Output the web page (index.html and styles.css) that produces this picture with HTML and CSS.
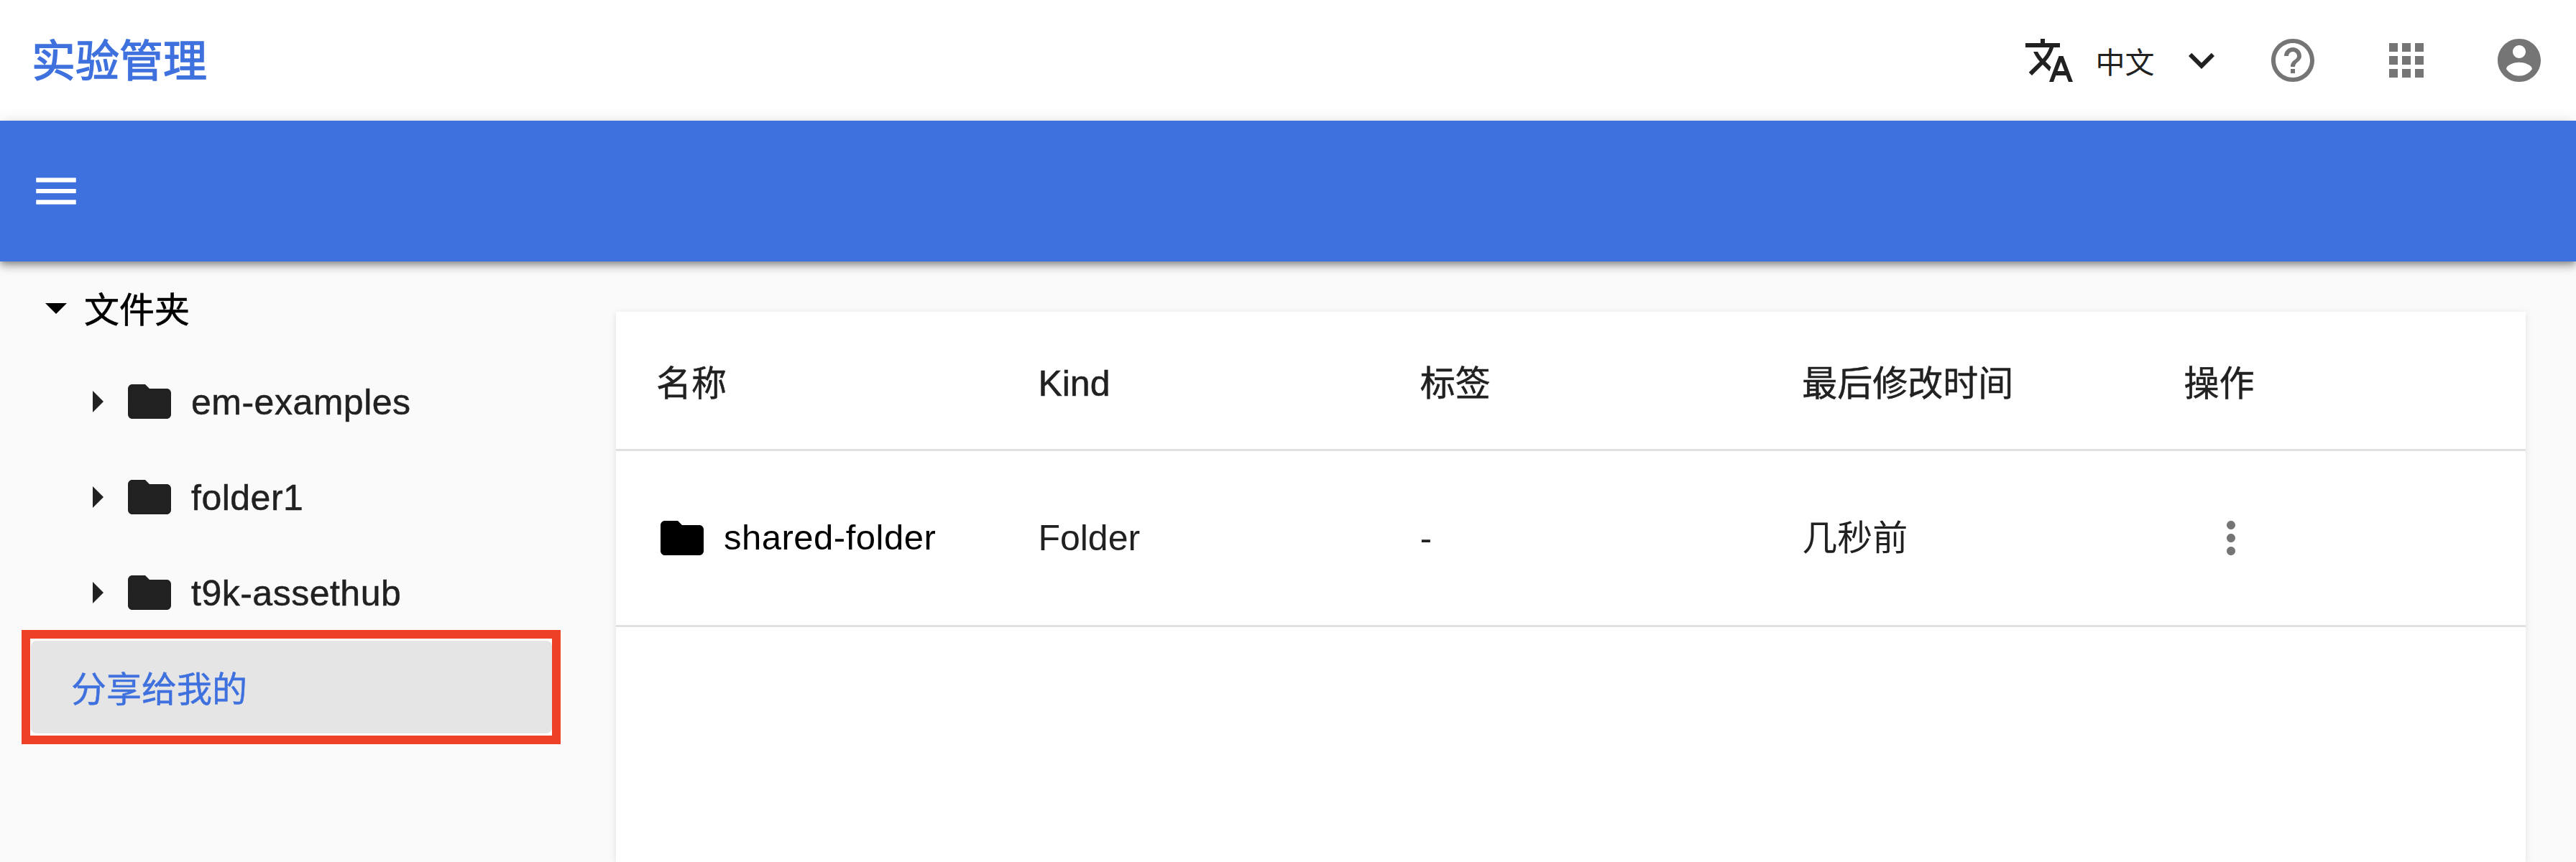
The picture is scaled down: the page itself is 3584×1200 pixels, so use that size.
FILE: index.html
```html
<!DOCTYPE html>
<html lang="zh">
<head>
    <meta charset="UTF-8">
    <meta name="viewport" content="width=device-width, initial-scale=1.0">
    <title>实验管理</title>
    <link rel="stylesheet" href="styles.css">
</head>
<body>
    <header class="app-header">
        <div class="app-title">实验管理</div>
        <div class="header-actions">
            <div class="lang-select">
                <svg class="icon icon-dark" viewBox="0 0 24 24"><path d="M12.87 15.07l-2.54-2.51.03-.03c1.74-1.94 2.98-4.17 3.71-6.53H17V4h-7V2H8v2H1v1.99h11.17C11.5 7.92 10.44 9.75 9 11.35 8.07 10.32 7.3 9.19 6.69 8h-2c.73 1.63 1.73 3.17 2.98 4.56l-5.09 5.02L4 19l5-5 3.11 3.11.76-2.04zM18.5 10h-2L12 22h2l1.12-3h4.75L21 22h2l-4.5-12zm-2.62 7l1.62-4.33L19.12 17h-3.24z"/></svg>
                <span class="lang-label">中文</span>
                <svg class="icon icon-dark" viewBox="0 0 24 24"><path d="M16.59 8.59L12 13.17 7.41 8.59 6 10l6 6 6-6z"/></svg>
            </div>
            <svg class="icon icon-grey" viewBox="0 0 24 24"><path d="M11 18h2v-2h-2v2zm1-16C6.48 2 2 6.48 2 12s4.48 10 10 10 10-4.48 10-10S17.52 2 12 2zm0 18c-4.41 0-8-3.59-8-8s3.59-8 8-8 8 3.59 8 8-3.59 8-8 8zm0-14c-2.21 0-4 1.79-4 4h2c0-1.1.9-2 2-2s2 .9 2 2c0 2-3 1.75-3 5h2c0-2.25 3-2.5 3-5 0-2.21-1.79-4-4-4z"/></svg>
            <svg class="icon icon-grey" viewBox="0 0 24 24"><path d="M4 8h4V4H4v4zm6 12h4v-4h-4v4zm-6 0h4v-4H4v4zm0-6h4v-4H4v4zm6 0h4v-4h-4v4zm6-10v4h4V4h-4zm-6 4h4V4h-4v4zm6 6h4v-4h-4v4zm0 6h4v-4h-4v4z"/></svg>
            <svg class="icon icon-grey" viewBox="0 0 24 24"><path d="M12 2C6.48 2 2 6.48 2 12s4.48 10 10 10 10-4.48 10-10S17.52 2 12 2zm0 3c1.66 0 3 1.34 3 3s-1.34 3-3 3-3-1.34-3-3 1.34-3 3-3zm0 14.2c-2.5 0-4.71-1.28-6-3.22.03-1.99 4-3.08 6-3.08 1.99 0 5.97 1.09 6 3.08-1.29 1.94-3.5 3.22-6 3.22z"/></svg>
        </div>
    </header>

    <div class="app-toolbar">
        <svg class="icon menu-icon" viewBox="0 0 24 24"><path d="M3 18h18v-2H3v2zm0-5h18v-2H3v2zm0-7v2h18V6H3z"/></svg>
    </div>

    <div class="app-body">
        <nav class="sidebar">
            <div class="tree-root">
                <svg class="icon icon-black" viewBox="0 0 24 24"><path d="M7 10l5 5 5-5z"/></svg>
                <span class="root-label">文件夹</span>
            </div>
            <div class="tree-item">
                <svg class="icon icon-dark" viewBox="0 0 24 24"><path d="M10 17l5-5-5-5v10z"/></svg>
                <svg class="icon icon-dark" viewBox="0 0 24 24"><path d="M10 4H4c-1.1 0-1.99.9-1.99 2L2 18c0 1.1.9 2 2 2h16c1.1 0 2-.9 2-2V8c0-1.1-.9-2-2-2h-8l-2-2z"/></svg>
                <span class="tree-label">em-examples</span>
            </div>
            <div class="tree-item">
                <svg class="icon icon-dark" viewBox="0 0 24 24"><path d="M10 17l5-5-5-5v10z"/></svg>
                <svg class="icon icon-dark" viewBox="0 0 24 24"><path d="M10 4H4c-1.1 0-1.99.9-1.99 2L2 18c0 1.1.9 2 2 2h16c1.1 0 2-.9 2-2V8c0-1.1-.9-2-2-2h-8l-2-2z"/></svg>
                <span class="tree-label">folder1</span>
            </div>
            <div class="tree-item">
                <svg class="icon icon-dark" viewBox="0 0 24 24"><path d="M10 17l5-5-5-5v10z"/></svg>
                <svg class="icon icon-dark" viewBox="0 0 24 24"><path d="M10 4H4c-1.1 0-1.99.9-1.99 2L2 18c0 1.1.9 2 2 2h16c1.1 0 2-.9 2-2V8c0-1.1-.9-2-2-2h-8l-2-2z"/></svg>
                <span class="tree-label">t9k-assethub</span>
            </div>
            <div class="shared-item">
                分享给我的
                <div class="annotation"></div>
            </div>
        </nav>

        <main class="content">
            <div class="file-card">
                <div class="file-row file-head">
                    <div class="cell">名称</div>
                    <div class="cell cell-latin">Kind</div>
                    <div class="cell">标签</div>
                    <div class="cell">最后修改时间</div>
                    <div class="cell">操作</div>
                </div>
                <div class="file-row file-line">
                    <div class="cell name-cell">
                        <svg class="icon icon-black" viewBox="0 0 24 24"><path d="M10 4H4c-1.1 0-1.99.9-1.99 2L2 18c0 1.1.9 2 2 2h16c1.1 0 2-.9 2-2V8c0-1.1-.9-2-2-2h-8l-2-2z"/></svg>
                        <span class="name-text">shared-folder</span>
                    </div>
                    <div class="cell cell-latin">Folder</div>
                    <div class="cell">-</div>
                    <div class="cell">几秒前</div>
                    <div class="cell">
                        <svg class="icon icon-grey more-icon" viewBox="0 0 24 24"><path d="M12 8c1.1 0 2-.9 2-2s-.9-2-2-2-2 .9-2 2 .9 2 2 2zm0 2c-1.1 0-2 .9-2 2s.9 2 2 2 2-.9 2-2-.9-2-2-2zm0 6c-1.1 0-2 .9-2 2s.9 2 2 2 2-.9 2-2-.9-2-2-2z"/></svg>
                    </div>
                </div>
            </div>
        </main>
    </div>
</body>
</html>
```

FILE: styles.css
```css
* {
    box-sizing: border-box;
}

body {
    margin: 0;
    height: 100vh;
    overflow: hidden;
    display: flex;
    flex-direction: column;
    background-color: #fafafa;
    color: #212121;
    font-family: "Liberation Sans", "Noto Sans CJK SC", sans-serif;
    font-size: 49px;
}

.icon {
    width: 72px;
    height: 72px;
    flex-shrink: 0;
    display: block;
    fill: currentColor;
}

.icon-dark {
    color: #212121;
}

.icon-grey {
    color: #757575;
}

.icon-black {
    color: #000;
}

.app-header {
    height: 168px;
    flex-shrink: 0;
    display: flex;
    align-items: center;
    justify-content: space-between;
    padding: 0 43px 0 44px;
    background-color: #fff;
}

.app-title {
    color: #3f71de;
    font-size: 61px;
    padding-bottom: 7px;
    -webkit-text-stroke: 1.4px #3f71de;
}

.header-actions {
    display: flex;
    align-items: center;
    gap: 85.5px;
}

.lang-select {
    display: flex;
    align-items: center;
    gap: 29px;
    margin-right: -30px;
}

.lang-label {
    font-size: 41px;
}

.app-toolbar {
    height: 196px;
    flex-shrink: 0;
    display: flex;
    align-items: center;
    padding-left: 41px;
    position: relative;
    background-color: #3f71de;
    box-shadow: 0 4px 8px -2px rgba(0,0,0,0.28), 0 8px 10px 0 rgba(0,0,0,0.18), 0 2px 20px 0 rgba(0,0,0,0.14);
}

.menu-icon {
    width: 74px;
    height: 74px;
    color: #fff;
}

.app-body {
    flex: 1;
    display: flex;
    min-height: 0;
}

.sidebar {
    width: 787px;
    flex-shrink: 0;
    color: #000;
}

.tree-root {
    height: 128px;
    display: flex;
    align-items: center;
    gap: 3px;
    padding-left: 42px;
}

.root-label {
    padding-bottom: 2px;
    -webkit-text-stroke: 0.6px #000;
}

.tree-item {
    height: 133px;
    display: flex;
    align-items: center;
    padding-left: 99px;
    color: #212121;
}

.tree-item .icon + .icon {
    margin-left: 1px;
}

.tree-label {
    margin-left: 22px;
    padding-top: 3px;
    font-size: 50px;
    letter-spacing: 0.5px;
    -webkit-text-stroke: 0.5px #212121;
}

.shared-item {
    position: relative;
    height: 129px;
    margin: 1px 19px 0 43px;
    padding: 0 0 2px 56px;
    display: flex;
    align-items: center;
    color: #3f71de;
    -webkit-text-stroke: 0.5px #3f71de;
    background-color: #e5e5e5;
    border-radius: 8px;
    box-shadow: 0 0 0 3px #fff;
}

/* red frame drawn over the screenshot */
.annotation {
    position: absolute;
    top: -15px;
    bottom: -15px;
    left: -13px;
    right: -12px;
    border: 12px solid #ee4026;
}

.content {
    flex: 1;
    min-width: 0;
    padding: 70px 70px 0 70px;
}

.file-card {
    height: 100%;
    background-color: #fff;
    box-shadow: 0 4px 2px -2px rgba(0,0,0,0.1), 0 2px 10px 0 rgba(0,0,0,0.1);
}

.file-row {
    display: grid;
    grid-template-columns: repeat(5, 1fr);
    align-items: center;
    border-bottom: 3px solid #e0e0e0;
    line-height: 60px;
}

.file-head {
    height: 194px;
    padding-top: 8px;
    -webkit-text-stroke: 0.5px #212121;
}

.file-line {
    height: 245px;
}

.cell {
    padding-left: 56px;
    min-width: 0;
}

.cell-latin {
    font-size: 50px;
}

.name-cell {
    display: flex;
    align-items: center;
    gap: 22px;
    color: #000;
}

.name-text {
    font-size: 49px;
    letter-spacing: 0.5px;
    margin-bottom: 3px;
}

.more-icon {
    margin-left: 29px;
}
```
